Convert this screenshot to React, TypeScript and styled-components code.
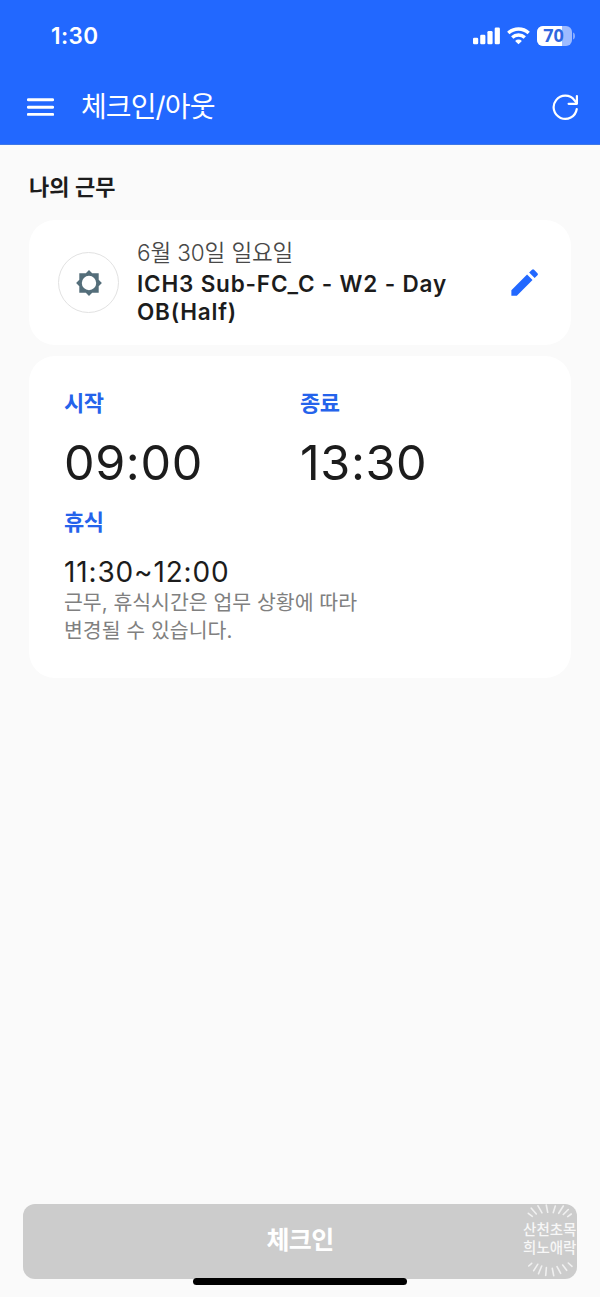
import React from 'react';
import styled, { createGlobalStyle } from 'styled-components';

const GlobalStyle = createGlobalStyle`
  * { box-sizing: border-box; }
  body {
    margin: 0;
    background: #fafafa;
    color: #1c1c1c;
    font-family: Inter, "Noto Sans CJK KR", sans-serif;
  }
`;

const Screen = styled.div`
  position: relative;
  display: flex;
  flex-direction: column;
  width: 600px;
  height: 1297px;
  background: #fafafa;
  overflow: hidden;
`;

const Header = styled.header`
  height: 145px;
  background: #2268ff;
  border-bottom: 1px solid #3f78e6;
`;

const StatusBar = styled.div`
  display: flex;
  align-items: center;
  justify-content: space-between;
  height: 72px;
  padding: 0 25px 0 51px;
  color: #fff;
`;

const Clock = styled.span`
  font-size: 22.5px;
  font-weight: 600;
  line-height: 30px;
  letter-spacing: 0.4px;
`;

const StatusIcons = styled.div`
  display: flex;
  align-items: center;
`;

const AppBar = styled.div`
  display: flex;
  align-items: center;
  height: 70px;
  padding: 0 21px 0 27px;
  color: #fff;
`;

const Title = styled.h1`
  flex: 1;
  margin: 0 0 0 27px;
  font-size: 28px;
  font-weight: 400;
  line-height: 36px;
  letter-spacing: -0.9px;
`;

const Content = styled.main`
  flex: 1;
  display: flex;
  flex-direction: column;
  padding: 26px 29px 0;
`;

const SectionTitle = styled.h2`
  margin: 0 0 17px;
  font-size: 22px;
  font-weight: 600;
  line-height: 32px;
  letter-spacing: 0;
`;

const Card = styled.section`
  background: #fff;
  border-radius: 26px;
`;

const ShiftCard = styled(Card)`
  display: flex;
  align-items: center;
  height: 125px;
  margin-bottom: 11px;
  padding: 0 29px;
`;

const ShiftBadge = styled.div`
  display: flex;
  align-items: center;
  justify-content: center;
  width: 61px;
  height: 61px;
  border: 1px solid #e2e2e2;
  border-radius: 50%;
`;

const ShiftText = styled.div`
  flex: 1;
  margin: -2px 0 0 18px;
`;

const ShiftDate = styled.div`
  margin: -1px 0 1px;
  color: #484848;
  font-size: 22.5px;
  font-weight: 350;
  line-height: 32px;
  letter-spacing: -0.1px;
`;

const ShiftName = styled.div`
  font-size: 22.5px;
  font-weight: 600;
  line-height: 27.5px;
  letter-spacing: 0.82px;
`;

const TimeCard = styled(Card)`
  height: 322px;
  padding: 31px 35px 0;
`;

const Columns = styled.div`
  display: grid;
  grid-template-columns: 236px 1fr;
`;

const Label = styled.div`
  color: #2563eb;
  font-size: 22px;
  font-weight: 600;
  line-height: 32px;
  letter-spacing: -0.6px;
`;

const Time = styled.div`
  margin: 14px 0 13px;
  font-size: 48.5px;
  font-weight: 400;
  line-height: 60px;
  letter-spacing: 0.6px;
`;

const BreakTime = styled.div`
  margin-top: 16px;
  font-size: 28px;
  font-weight: 400;
  line-height: 36px;
  letter-spacing: 0.85px;
`;

const Note = styled.p`
  margin: -1px 0 0;
  color: #808080;
  font-size: 20.5px;
  font-weight: 400;
  line-height: 27.5px;
  letter-spacing: 0;
`;

const Footer = styled.footer`
  padding: 0 23px 18px;
`;

const CheckInButton = styled.button`
  position: relative;
  display: block;
  width: 554px;
  height: 75px;
  padding: 0 0 4px;
  border: 0;
  border-radius: 12px;
  background: #ccc;
  color: #fff;
  font-family: inherit;
  font-size: 25px;
  font-weight: 700;
  line-height: 36px;
  letter-spacing: -0.6px;
`;

const Watermark = styled.div`
  position: absolute;
  right: 0;
  top: 0;
  width: 56px;
  height: 75px;
  color: #f7f7f7;
  font-size: 14.5px;
  font-weight: 500;
  line-height: 17.5px;
  letter-spacing: 0;
  white-space: nowrap;
`;

const WatermarkText = styled.div`
  padding: 17px 0 0 1.5px;
`;

const WatermarkRays = styled.svg`
  position: absolute;
  inset: 0;
`;

const HomeIndicator = styled.div`
  position: absolute;
  left: 193px;
  bottom: 12px;
  width: 214px;
  height: 7.5px;
  border-radius: 4px;
  background: #000;
`;

const Level = styled.text`
  font-family: "Open Sans", sans-serif;
  font-size: 18px;
  font-weight: 700;
`;

const StatusGlyphs = () => (
  <svg width="103" height="30" viewBox="472 21 103 30">
    <g fill="#fff">
      <rect x="473" y="37.7" width="5.2" height="6.6" rx="1.3" />
      <rect x="480.2" y="34.8" width="5.2" height="9.5" rx="1.3" />
      <rect x="487.4" y="31" width="5.2" height="13.3" rx="1.3" />
      <rect x="494.7" y="27.5" width="5.2" height="16.8" rx="1.3" />
      <path d="M518.5 44.3l-3.4-3.4a4.9 4.9 0 0 1 6.8 0z" />
    </g>
    <g fill="none" stroke="#fff" strokeWidth="3.4">
      <path d="M508.3 33a15 15 0 0 1 20.4 0" />
      <path d="M512.2 37.5a9.3 9.3 0 0 1 12.6 0" />
    </g>
    <rect x="537" y="26" width="35" height="20" rx="6" fill="#9dbbff" />
    <path d="M543 26h19v20h-19a6 6 0 0 1-6-6V32a6 6 0 0 1 6-6z" fill="#fff" />
    <path d="M573.2 32.5c2.2.8 2.2 6 0 7z" fill="#9dbbff" />
    <Level x="553.5" y="42.3" textAnchor="middle" fill="#2f67df">70</Level>
  </svg>
);

const MenuIcon = () => (
  <svg width="27" height="20" viewBox="0 0 27 20">
    <path d="M1.3 2.8h24.4M1.3 10.2h24.4M1.3 17.4h24.4" stroke="#fff" strokeWidth="2.9" strokeLinecap="round" />
  </svg>
);

const RefreshIcon = () => (
  <svg width="27" height="28" viewBox="0 0 27 28" fill="none" stroke="#fff" strokeWidth="2.2">
    <path d="M24.7 16.2a11.6 11.6 0 1 1-2.2-8.9l2 2.4" strokeLinecap="round" />
    <path d="M24.9 3v7.8h-8.3" strokeLinecap="round" strokeLinejoin="round" />
  </svg>
);

const SunIcon = () => (
  <svg width="26" height="26" viewBox="-13 -13 26 26" fill="#546e7a">
    <path
      fillRule="evenodd"
      d="M0-12.9L3.2-9.7H9.7V-3.2L12.9 0 9.7 3.2V9.7H3.2L0 12.9-3.2 9.7H-9.7V3.2L-12.9 0-9.7-3.2V-9.7H-3.2zM0-7.2a7.2 7.2 0 1 0 0 14.4 7.2 7.2 0 0 0 0-14.4z"
    />
  </svg>
);

const PencilIcon = () => (
  <svg width="35" height="35" viewBox="0 0 24 24" fill="#2268ff">
    <path d="M3 17.25V21h3.75L17.5 10.25l-3.75-3.75zM20.9 7a1 1 0 0 0 0-1.41l-2.34-2.34a1 1 0 0 0-1.41 0l-1.95 1.95 3.75 3.75z" />
  </svg>
);

const RAYS =
  'M7.3 9.3l4 3M10.3 4.2l5 5.8M17 1.8l4 7M25.3 1l1.4 7.3M34.3 2l-2 6.6M42.3 2l-4.6 7.3M47.3 5.5l-5 5M50.3 10l-3.6 2.6' +
  'M7.7 62l3-2.7M12.7 66.7l4-6.4M17.5 69.7l3.2-7.7M24.7 71.5l.7-8M32.7 71.7l-1.4-7.4M39.7 69.3l-3.7-6.6M45.7 66.3l-4-5.3M51 62.3l-3.7-3.3';

const Rays = () => (
  <WatermarkRays width="56" height="75" viewBox="0 0 56 75" fill="none">
    <path d={RAYS} stroke="#f0f0f0" strokeWidth="1.6" strokeLinecap="round" />
  </WatermarkRays>
);

export default function App() {
  return (
    <Screen lang="ko">
      <GlobalStyle />
      <Header>
        <StatusBar>
          <Clock>1:30</Clock>
          <StatusIcons>
            <StatusGlyphs />
          </StatusIcons>
        </StatusBar>
        <AppBar>
          <MenuIcon />
          <Title>체크인/아웃</Title>
          <RefreshIcon />
        </AppBar>
      </Header>
      <Content>
        <SectionTitle>나의 근무</SectionTitle>
        <ShiftCard>
          <ShiftBadge>
            <SunIcon />
          </ShiftBadge>
          <ShiftText>
            <ShiftDate>6월 30일 일요일</ShiftDate>
            <ShiftName>
              ICH3 Sub-FC_C - W2 - Day
              <br />
              OB(Half)
            </ShiftName>
          </ShiftText>
          <PencilIcon />
        </ShiftCard>
        <TimeCard>
          <Columns>
            <div>
              <Label>시작</Label>
              <Time>09:00</Time>
            </div>
            <div>
              <Label>종료</Label>
              <Time>13:30</Time>
            </div>
          </Columns>
          <Label>휴식</Label>
          <BreakTime>11:30~12:00</BreakTime>
          <Note>
            근무, 휴식시간은 업무 상황에 따라
            <br />
            변경될 수 있습니다.
          </Note>
        </TimeCard>
      </Content>
      <Footer>
        <CheckInButton type="button">
          체크인
          <Watermark>
            <WatermarkText>
              산천초목
              <br />
              희노애락
            </WatermarkText>
            <Rays />
          </Watermark>
        </CheckInButton>
      </Footer>
      <HomeIndicator />
    </Screen>
  );
}
